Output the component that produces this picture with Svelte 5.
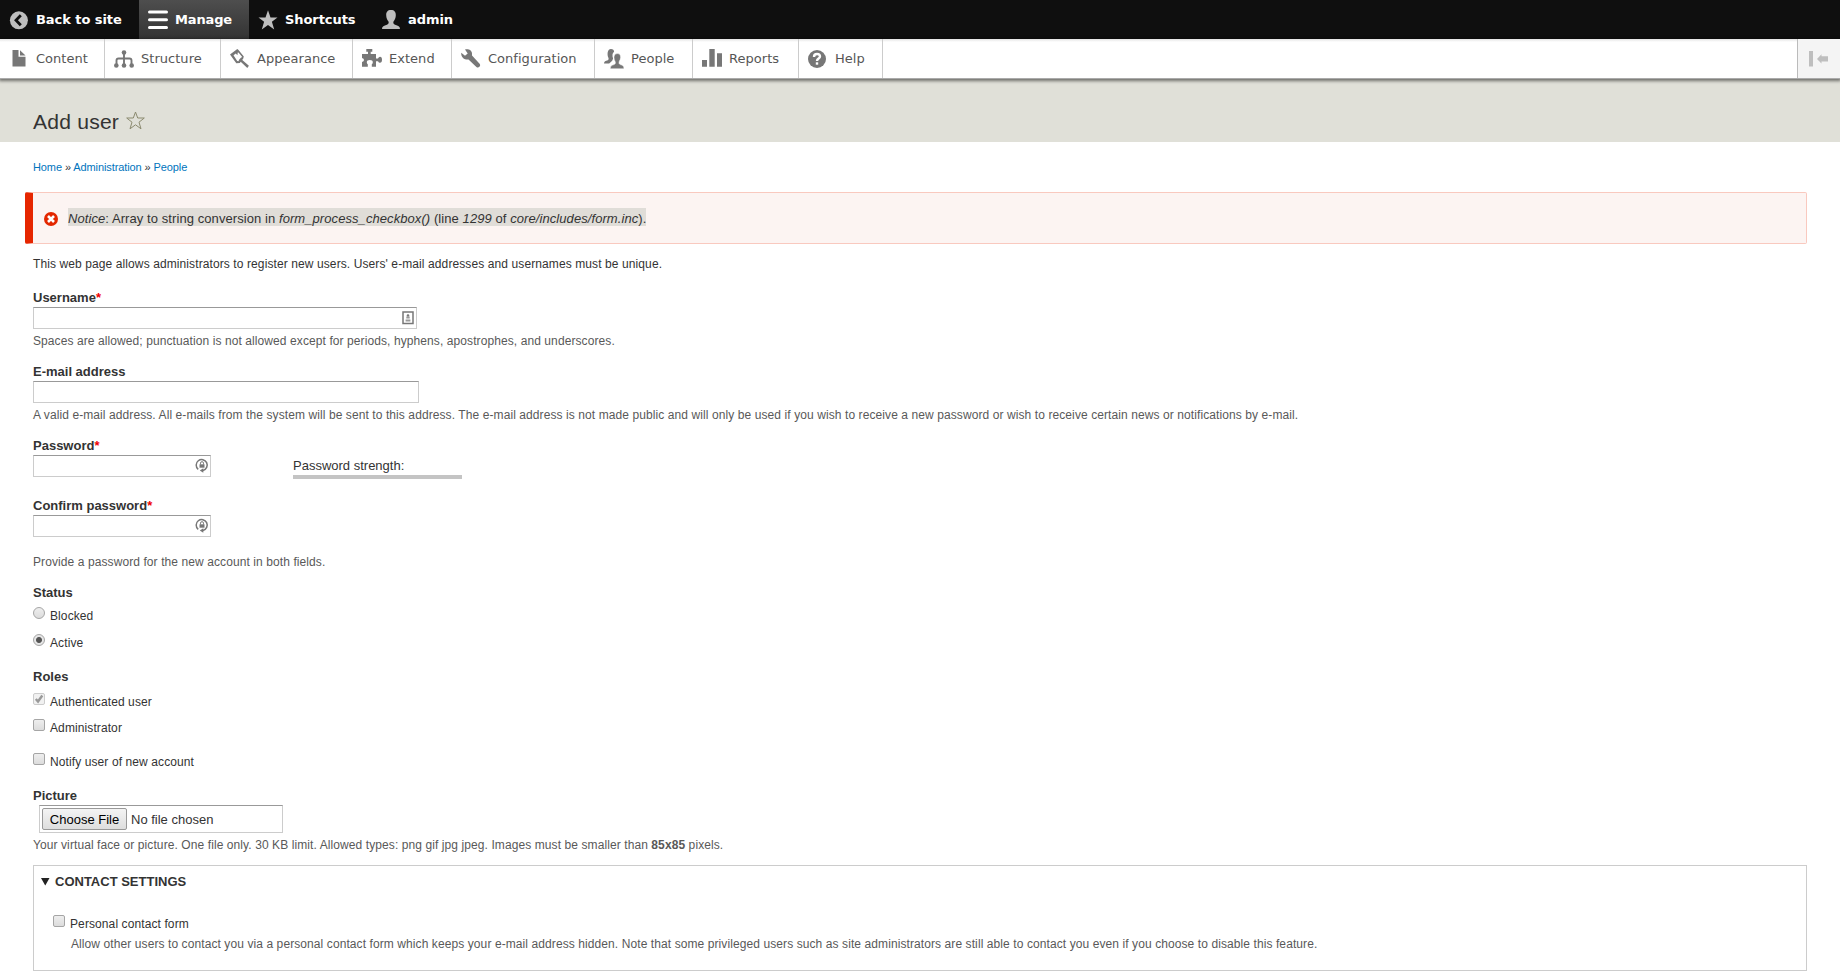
<script lang="ts">
  /** Items of the tray below the admin bar. */
  const tray = ['Content', 'Structure', 'Appearance', 'Extend', 'Configuration', 'People', 'Reports', 'Help'];

  let status = $state('active');
</script>

{#snippet lock()}
  <svg class="field-icon" width="14" height="16" viewBox="0 0 14 16">
    <path d="M3.200 11.300A5.500 5.500 0 1 1 8 12.400" fill="none" stroke="#777" stroke-width="1.500" />
    <path d="M8.300 10.200v4.600L4.800 12.500z" fill="#777" />
    <path d="M4.500 6.300h5v3.400h-5z" fill="#777" />
    <path d="M5.500 6.500V5.200a1.500 1.500 0 0 1 3 0v1.300" fill="none" stroke="#777" />
  </svg>
{/snippet}

<nav class="bar">
  <a class="tab back" href="#top">
    <svg width="20" height="20" viewBox="0 0 20 20">
      <circle cx="9.9" cy="10.300" r="9" fill="#bebebe" />
      <path d="M11.800 5.300L7 10.300l4.800 5" fill="none" stroke="#0f0f0f" stroke-width="2.800" />
    </svg>
    <span>Back to site</span>
  </a>
  <a class="tab manage" href="#top">
    <svg width="20" height="20" viewBox="0 0 20 20">
      <path d="M1.500 2h17M1.500 9.800h17M1.500 17.500h17" stroke="#fff" stroke-width="3" stroke-linecap="round" />
    </svg>
    <span>Manage</span>
  </a>
  <a class="tab" href="#top">
    <svg width="20" height="20" viewBox="0 0 20 20">
      <path fill="#bebebe" d="M10 .3l2.500 7.200h7l-5.600 4.300 2.300 7.700-6.200-4.600-6.200 4.600 2.300-7.700L.5 7.500h7z" />
    </svg>
    <span>Shortcuts</span>
  </a>
  <a class="tab" href="#top">
    <svg width="20" height="20" viewBox="0 0 20 20">
      <path fill="#bebebe" d="M10 0c3.400 0 4.900 2 4.800 5.300-.1 2.700-1 4.600-2.300 6.200-.6 1.800.2 2.700 1.600 3.300 2.900.9 4.900 1.500 4.900 4.200H1c0-2.700 2-3.300 4.900-4.200 1.400-.6 2.200-1.500 1.600-3.300C6.200 9.900 5.300 8 5.200 5.300 5.100 2 6.600 0 10 0z" />
    </svg>
    <span>admin</span>
  </a>
</nav>

<nav class="tray">
  {#each tray as item}
    <a class="tray-tab" href="#top">
      <svg width="20" height="20" viewBox="0 0 20 20" fill="#777">
        {#if item === 'Content'}
          <path d="M3.500 1h6v6.700h7v9.800h-13z" /><path d="M11 1.300l5.500 5.200H11z" />
        {:else if item === 'Structure'}
          <circle cx="10" cy="3.500" r="2.300" />
          <circle cx="2.300" cy="16.500" r="2.300" /><circle cx="10" cy="16.500" r="2.300" /><circle cx="17.700" cy="16.500" r="2.300" />
          <path d="M10 4v12M2.500 16v-4.500q0-2 2-2h11q2 0 2 2V16" fill="none" stroke="#777" stroke-width="1.900" />
        {:else if item === 'Appearance'}
          <path d="M0 5.500L7.300 0l1.200 1 5.300 6.500-.8 2.700-1 .6 6.900 6-1.600 2.200-6.600-6.300-.8 1.300-3.600.2z" />
          <path d="M3.500 6.300l2.300-1.800 1.200 1.300.8-.2-.3-1.800 1-.3 3.700 4.500-1.300.8-1.800 2-.6 1.500-1.300-.3z" fill="#fff" />
        {:else if item === 'Extend'}
          <path d="M0 5h6V2.700H4.300V0h6v2.700H8.700V5H14v4.600h2q.7-1.800 2-1.800 2 0 2 3t-2 3q-1.300 0-2-1.600h-2v5.500H9.800v-2.400q1-.6 1-2 0-2.400-3-2.400t-3 2.400q0 1.400 1 2v2.400H0v-4.800q2-.4 2-2t-2-2z" />
        {:else if item === 'Configuration'}
          <path d="M4 .5C6.500-.5 11 .5 11 4.500v2l7.600 8.300q1.200 1.600-.2 3t-3 .1L7.500 10.500C3.500 11 0 8.500.2 3.800l3.800 3 2.700-2.300z" />
        {:else if item === 'People'}
          <path d="M7 0c2 0 3 1 3.100 2.800-1.900 1.200-2 3.900-1 6.700l-.9 2.200-3 2.900H0c0-2.400 1.500-2.800 3.800-3.400 1-.6.900-1.700.6-2.500C3.100 6.700 2.900 0 7 0z" />
          <path d="M13.500 4.600c2.600 0 3.200 1.800 3.100 4-.1 1.500-.6 2.700-1.300 3.700-.6 2-.2 2.800 1 3.300 2 .7 3.700 1 3.700 4.200H6.300c0-3.200 1.700-3.500 3.700-4.200 1.500-.6 1.700-1.700 1-3.300-.7-1-.9-2.200-1-3.700-.1-2.200.8-4 3.500-4z" stroke="#fff" stroke-width=".5" />
        {:else if item === 'Reports'}
          <path d="M0 11h5v6.700H0zM7.300 0h5.400v17.700H7.300zM15 4.300h5v13.400h-5z" />
        {:else}
          <circle cx="9" cy="10" r="9" />
          <path d="M6 8q0-3 3-3t3 2.600c0 1.900-3 2-3 4.300" fill="none" stroke="#fff" stroke-width="2.400" />
          <path d="M7.800 13.300h2.400v2.400H7.800z" fill="#fff" />
        {/if}
      </svg>
      <span>{item}</span>
    </a>
  {/each}
  <button class="toggle" aria-label="Vertical orientation">
    <svg width="20" height="16" viewBox="0 0 20 16" fill="#bebebe">
      <path d="M0 0h4v15.500H0zM8 8l4.500-4.700v2H19v5.200h-6.500v2z" />
    </svg>
  </button>
</nav>

<header>
  <h1>Add user</h1>
  <svg width="19" height="19" viewBox="0 0 19 19">
    <path fill="none" stroke="#8b8a6f" stroke-linejoin="round" d="M9.500 1l2.200 6h6.600l-5.300 4.200 2 6.600-5.500-4-5.500 4 2-6.600L.7 7h6.600z" />
  </svg>
</header>

<main>
  <div class="breadcrumb"><a href="#top">Home</a> » <a href="#top">Administration</a> » <a href="#top">People</a></div>

  <div class="message">
    <svg width="14" height="14" viewBox="0 0 14 14">
      <circle cx="7" cy="7" r="7" fill="#e32700" />
      <path d="M4 4l6 6M10 4l-6 6" stroke="#fff" stroke-width="2.600" />
    </svg>
    <span class="notice"><em>Notice</em>: Array to string conversion in <em>form_process_checkbox()</em> (line <em>1299</em> of <em>core/includes/form.inc</em>).</span>
  </div>

  <p class="help">This web page allows administrators to register new users. Users' e-mail addresses and usernames must be unique.</p>

  <section class="item">
    <label for="name">Username<b class="required">*</b></label>
    <div class="field wide">
      <input id="name" type="text" />
      <svg class="field-icon" width="12" height="14" viewBox="0 0 12 14">
        <path d="M1 1h10v11.500H1z" fill="#fff" stroke="#777" stroke-width="1.500" />
        <circle cx="6" cy="4.500" r="1.300" fill="#777" />
        <path d="M4.300 5.500h3.400v2H4.300zM3.600 8.500h4.800v2H3.600z" fill="#999" />
      </svg>
    </div>
    <p class="description">Spaces are allowed; punctuation is not allowed except for periods, hyphens, apostrophes, and underscores.</p>
  </section>

  <section class="item">
    <label for="mail">E-mail address</label>
    <div class="field mail"><input id="mail" type="text" /></div>
    <p class="description">A valid e-mail address. All e-mails from the system will be sent to this address. The e-mail address is not made public and will only be used if you wish to receive a new password or wish to receive certain news or notifications by e-mail.</p>
  </section>

  <section class="passwords">
    <div>
      <label for="pass1">Password<b class="required">*</b></label>
      <div class="field short"><input id="pass1" type="password" />{@render lock()}</div>
      <label class="confirm" for="pass2">Confirm password<b class="required">*</b></label>
      <div class="field short"><input id="pass2" type="password" />{@render lock()}</div>
    </div>
    <div class="strength">Password strength:</div>
  </section>
  <p class="description both">Provide a password for the new account in both fields.</p>

  <h4>Status</h4>
  <div class="options">
    <label class="option radio"><input type="radio" value="blocked" bind:group={status} /><span>Blocked</span></label>
    <label class="option radio"><input type="radio" value="active" bind:group={status} /><span>Active</span></label>
  </div>

  <h4 class="roles">Roles</h4>
  <div class="options boxes">
    <label class="option">
      <span class="check disabled">
        <svg width="12" height="12" viewBox="0 0 12 12"><path d="M2.800 6l2.200 2.500L9.300 2.500" fill="none" stroke="#999" stroke-width="2.400" /></svg>
      </span>
      <span>Authenticated user</span>
    </label>
    <label class="option"><input type="checkbox" /><span>Administrator</span></label>
    <label class="option notify"><input type="checkbox" /><span>Notify user of new account</span></label>
  </div>

  <h4 class="picture">Picture</h4>
  <div class="file"><button>Choose File</button><span>No file chosen</span></div>
  <p class="description">Your virtual face or picture. One file only. 30 KB limit. Allowed types: png gif jpg jpeg. Images must be smaller than <strong>85x85</strong> pixels.</p>

  <section class="contact">
    <h3>
      <svg width="9" height="8" viewBox="0 0 9 8"><path d="M0 0h8.500L4.250 7.500z" fill="#222" /></svg>
      Contact settings
    </h3>
    <label class="option"><input type="checkbox" /><span>Personal contact form</span></label>
    <p class="description">Allow other users to contact you via a personal contact form which keeps your e-mail address hidden. Note that some privileged users such as site administrators are still able to contact you even if you choose to disable this feature.</p>
  </section>
</main>

<style>
  :global(body) {
    background: #fff;
    color: #333;
    font: 13px/17px "Liberation Sans", Arial, sans-serif;
    overflow: hidden;
  }

  a {
    color: #0074bd;
    text-decoration: none;
  }

  p, h1, h3, h4 {
    margin: 0;
  }

  .bar {
    display: grid;
    grid-template-columns: 139px 110px 123px 110px;
    height: 39px;
    background: #0f0f0f;
    font: bold 13px/39px "DejaVu Sans", sans-serif;
    letter-spacing: -0.06px;
  }

  .tab, .tray-tab {
    display: flex;
    align-items: center;
    gap: 7px;
    padding-left: 9px;
    box-sizing: border-box;
    white-space: nowrap;
  }

  .tab {
    color: #fff;
  }

  .tab.manage {
    background: linear-gradient(#4e4e4e, #333);
    letter-spacing: -0.15px;
  }

  .tray {
    position: relative;
    display: grid;
    grid-template-columns: 105px 116px 132px 99px 143px 98px 106px 84px 1fr;
    height: 40px;
    box-sizing: border-box;
    background: linear-gradient(#e4e4e4, #fff 3px);
    border-bottom: 1px solid #aaa;
    box-shadow: 0 1px 3px 1px rgba(0, 0, 0, 0.5);
    font: 13px/38px "DejaVu Sans", sans-serif;
  }

  .tray-tab {
    padding-top: 1px;
    border-right: 1px solid #ccc;
    color: #565656;
    letter-spacing: 0.03px;
  }

  .toggle {
    display: flex;
    align-items: center;
    justify-self: end;
    width: 43px;
    padding: 0 0 0 11px;
    border: 0;
    border-left: 1px solid #bbb;
    background: #f4f4f4;
  }

  header {
    display: flex;
    align-items: flex-start;
    gap: 7px;
    height: 63px;
    padding: 32px 33px 0;
    box-sizing: border-box;
    background: #e0e0d8;
  }

  h1 {
    font-size: 21.125px;
    font-weight: normal;
    line-height: 22px;
    letter-spacing: 0.2px;
  }

  main {
    padding: 0 33px;
  }

  .breadcrumb {
    padding: 16px 0 0;
    font-size: 11px;
    line-height: 19px;
    height: 18px;
    letter-spacing: -0.1px;
  }

  .message {
    display: flex;
    align-items: center;
    gap: 10px;
    height: 52px;
    margin: 16px 0 0 -8px;
    padding-left: 11px;
    box-sizing: border-box;
    border: 1px solid #f9c9bf;
    border-left: 8px solid #e62600;
    border-radius: 2px;
    background: #fcf4f2;
  }

  .message svg {
    margin-top: 2px;
  }

  .notice {
    margin-bottom: 2px;
    padding-top: 3px;
    background: #e0ddd8;
    line-height: 15px;
    letter-spacing: 0.075px;
  }

  .help {
    padding: 11px 0 0;
    font-size: 12px;
    line-height: 18px;
    letter-spacing: 0.1px;
  }

  .item {
    height: 74px;
  }

  .help + .item {
    padding-top: 16px;
  }

  label, h4 {
    display: block;
    font-size: 13px;
    font-weight: bold;
    line-height: 18px;
  }

  .required {
    color: #e00;
  }

  .field {
    position: relative;
    height: 22px;
  }

  .field input {
    display: block;
    width: 100%;
    height: 100%;
    box-sizing: border-box;
    border: 1px solid #ccc;
    border-top-color: #999;
    background: #fff;
  }

  .wide {
    width: 384px;
  }

  .mail {
    width: 386px;
  }

  .short {
    width: 178px;
  }

  .field-icon {
    position: absolute;
    top: 3px;
    right: 2px;
  }

  .wide .field-icon {
    top: 4px;
    right: 3px;
  }

  .description {
    padding-top: 3px;
    color: #595959;
    font-size: 12px;
    line-height: 18px;
    letter-spacing: 0.09px;
    white-space: nowrap;
  }

  .passwords {
    display: flex;
    gap: 82px;
    height: 100px;
  }

  .confirm {
    margin-top: 20px;
  }

  .strength {
    width: 169px;
    height: 23px;
    margin-top: 19px;
    border-bottom: 4px solid #c4c4c4;
    box-sizing: border-box;
    line-height: 19px;
  }

  .both {
    padding-top: 16px;
  }

  h4 {
    padding-top: 13px;
  }

  .roles {
    padding-top: 10px;
  }

  .picture {
    padding-top: 11px;
  }

  .options {
    padding-top: 2px;
  }

  .options.boxes {
    padding-top: 4px;
  }

  .option {
    display: flex;
    gap: 5px;
    height: 26px;
    font-size: 12px;
    font-weight: normal;
    letter-spacing: 0.1px;
  }

  .option.notify {
    margin-top: 8px;
  }

  .option > span:last-child {
    padding-top: 3px;
  }

  .option input, .check {
    width: 12px;
    height: 12px;
    margin: 3px 0 0;
    box-sizing: border-box;
    appearance: none;
    border: 1px solid #a5a5a5;
    border-radius: 2px;
    background: linear-gradient(#eee, #dcdcdc);
  }

  .option.radio {
    height: 27px;
  }

  .option.radio input {
    border-radius: 50%;
  }

  .option.radio input:checked {
    background: radial-gradient(circle, #555 2.500px, #e6e6e6 3.500px);
  }

  .check.disabled {
    border-color: #ccc;
    background: #f1f1f1;
  }

  .check svg {
    display: block;
    margin: -1px;
  }

  .file {
    display: flex;
    align-items: center;
    gap: 4px;
    width: 244px;
    height: 28px;
    margin-left: 6px;
    padding-left: 2px;
    box-sizing: border-box;
    border: 1px solid #ccc;
    border-top-color: #999;
  }

  .file button {
    width: 85px;
    height: 22px;
    padding: 0;
    border: 1px solid #999;
    border-radius: 2px;
    background: linear-gradient(#f4f4f4, #dedede);
    color: #000;
    font: 13px "Liberation Sans", Arial, sans-serif;
  }

  .contact {
    height: 106px;
    margin-top: 11px;
    padding: 7px 0 0 7px;
    box-sizing: border-box;
    border: 1px solid #ccc;
  }

  h3 {
    display: flex;
    align-items: center;
    gap: 5px;
    font-size: 13px;
    line-height: 18px;
    text-transform: uppercase;
  }

  .contact .option {
    height: 23px;
    margin: 21px 0 0 12px;
  }

  .contact .description {
    padding: 0 0 0 30px;
  }
</style>
